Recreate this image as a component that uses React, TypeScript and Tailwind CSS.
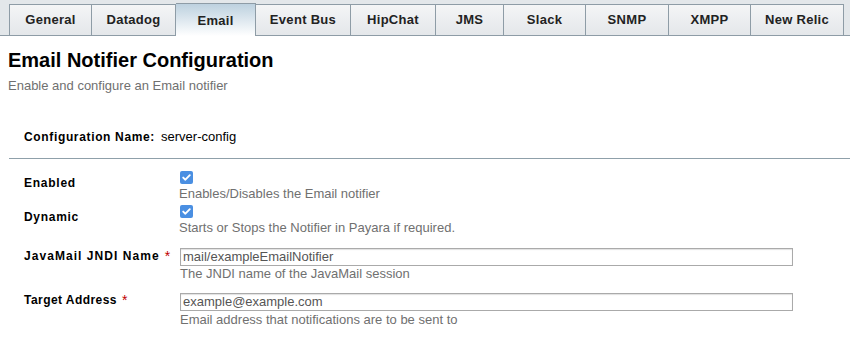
import React from "react";

const tabs: { label: string; w: string; active?: boolean }[] = [
  { label: "General", w: "w-[83px]" },
  { label: "Datadog", w: "w-[84px]" },
  { label: "Email", w: "w-[80px]", active: true },
  { label: "Event Bus", w: "w-[95px]" },
  { label: "HipChat", w: "w-[85px]" },
  { label: "JMS", w: "w-[68px]" },
  { label: "Slack", w: "w-[82px]" },
  { label: "SNMP", w: "w-[83px]" },
  { label: "XMPP", w: "w-[82px]" },
  { label: "New Relic", w: "w-[93px]" },
];

function Check() {
  return (
    <div className="w-[13px] h-[13px] rounded-[2px] bg-[#4a8fe2] flex items-center justify-center">
      <svg width="13" height="13" viewBox="0 0 13 13">
        <path d="M3.2 6.6 L5.4 8.7 L9.8 4.2" fill="none" stroke="#ffffff" strokeWidth="1.9" strokeLinecap="round" strokeLinejoin="round" />
      </svg>
    </div>
  );
}

function Label({ children, req, pt, tr }: { children: React.ReactNode; req?: boolean; pt: string; tr: string }) {
  return (
    <div className={`w-[155px] shrink-0 ${pt} text-[12px] leading-[14px] font-bold text-black`}>
      <span className={tr}>{children}</span>
      {req && <span className="ml-[5px] text-[14px] leading-none text-[#c00000] align-top font-normal">*</span>}
    </div>
  );
}

function Help({ children, mt }: { children: React.ReactNode; mt: string }) {
  return <div className={`${mt} text-[13px] leading-[15px] text-[#707070]`}>{children}</div>;
}

function TextField({ value }: { value: string }) {
  return (
    <div className="w-[613px] h-[18px] border border-[#aaaaaa] bg-white shadow-[inset_0_1px_1px_#e0e0e0] pl-[2px] text-[13px] leading-[16px] text-[#555555]">
      {value}
    </div>
  );
}

export default function App() {
  return (
    <div className="w-[850px] h-[338px] bg-white overflow-hidden" style={{ fontFamily: '"Liberation Sans", Arial, sans-serif' }}>
      <div className="h-[36px] bg-[#e3e7ea] border-b border-[#8e9ca6] flex items-end pl-[9px]">
        {tabs.map((t, i) =>
          t.active ? (
            <div
              key={t.label}
              className={`${t.w} h-[33px] -mb-px border-t border-r border-[#8e9ca6] bg-gradient-to-b from-[#bdd1df] to-white flex items-center justify-center text-[13px] font-bold tracking-[0.3px] text-[#222]`}
            >
              <span className="mt-[1px]">{t.label}</span>
            </div>
          ) : (
            <div
              key={t.label}
              className={`${t.w} h-[31px] border-t border-r ${i === 0 ? "border-l" : ""} border-[#8e9ca6] bg-gradient-to-b from-[#f4f5f6] to-[#e4e7ea] flex items-center justify-center text-[13px] font-bold tracking-[0.3px] text-[#222]`}
            >
              {t.label}
            </div>
          )
        )}
      </div>

      <div className="pl-[8px] mt-[12px] text-[20px] leading-[24px] font-bold text-black">Email Notifier Configuration</div>
      <div className="pl-[8px] mt-[6px] text-[13px] leading-[15px] text-[#707070]">Enable and configure an Email notifier</div>

      <div className="pl-[24px] mt-[36px] flex items-baseline leading-[15px]">
        <span className="text-[12px] font-bold tracking-[0.65px] text-black">Configuration Name:</span>
        <span className="ml-[6px] text-[13px] text-black">server-config</span>
      </div>

      <div className="ml-[9px] mt-[13px] border-t border-[#8fa0aa]" />

      <div className="pl-[24px] mt-[10px] flex flex-col">
        <div className="flex">
          <Label pt="pt-[7px]" tr="tracking-[0.75px]">Enabled</Label>
          <div className="flex flex-col">
            <div className="mt-[2px] ml-[1px]"><Check /></div>
            <Help mt="mt-[2px]">Enables/Disables the Email notifier</Help>
          </div>
        </div>
        <div className="flex mt-[2px]">
          <Label pt="pt-[7px]" tr="tracking-[0.7px]">Dynamic</Label>
          <div className="flex flex-col">
            <div className="mt-[2px] ml-[1px]"><Check /></div>
            <Help mt="mt-[2px]">Starts or Stops the Notifier in Payara if required.</Help>
          </div>
        </div>
        <div className="flex mt-[13px]">
          <Label pt="pt-[1px]" req tr="tracking-[1.05px]">JavaMail JNDI Name</Label>
          <div className="flex flex-col ml-[1px]">
            <TextField value="mail/exampleEmailNotifier" />
            <Help mt="mt-0">The JNDI name of the JavaMail session</Help>
          </div>
        </div>
        <div className="flex mt-[12px]">
          <Label pt="pt-0" req tr="tracking-[0.45px]">Target Address</Label>
          <div className="flex flex-col ml-[1px]">
            <TextField value="example@example.com" />
            <Help mt="mt-[1px]">Email address that notifications are to be sent to</Help>
          </div>
        </div>
      </div>
    </div>
  );
}
